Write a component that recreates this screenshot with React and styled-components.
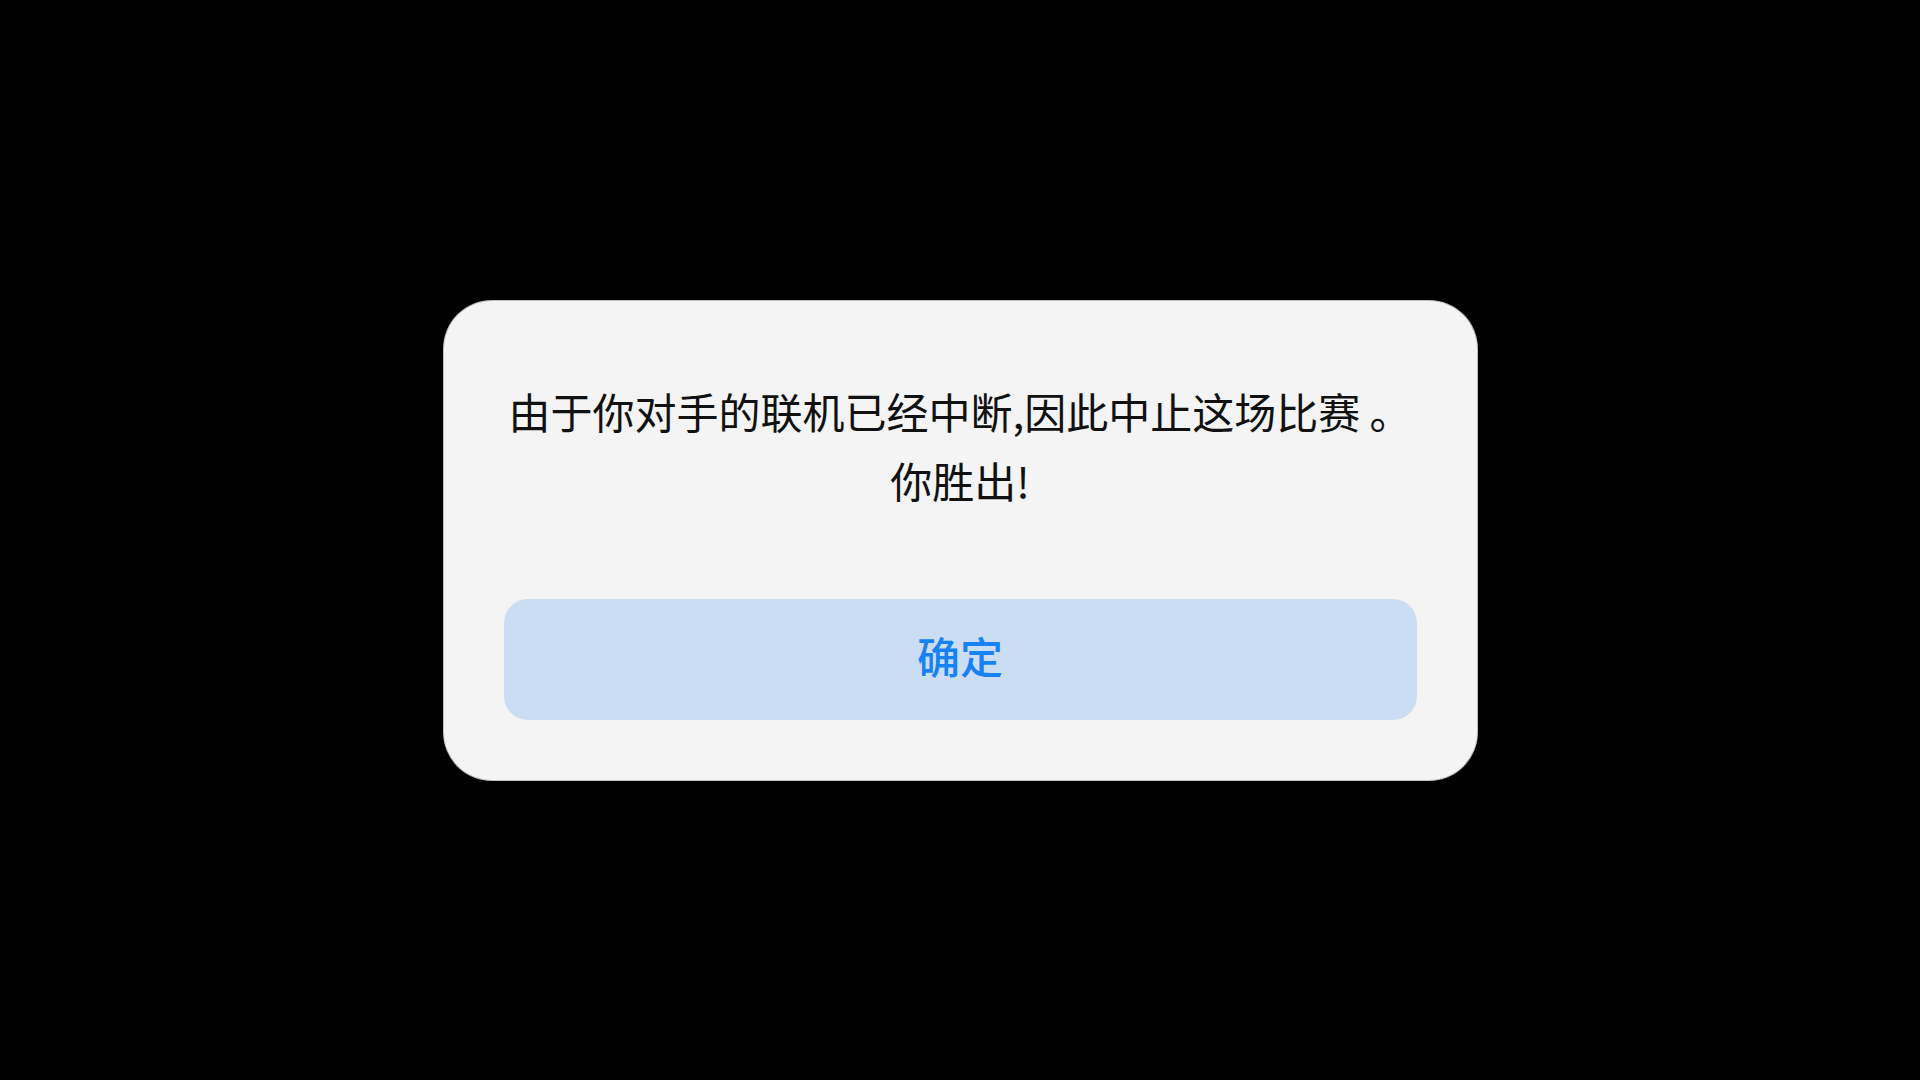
import React from 'react'
import styled, { createGlobalStyle } from 'styled-components'

const GlobalStyle = createGlobalStyle`
    html, body {
        margin: 0;
        padding: 0;
        background-color: #000;
    }
    body {
        font-family: "Noto Sans CJK SC", "Noto Sans", sans-serif;
    }
`

function App() {
    return (
        <>
            <GlobalStyle />
            <Screen>
                <Dialog>
                    <Message>
                        <Line>由于你对手的联机已经中断,因此中止这场比赛 。</Line>
                        <Line>你胜出!</Line>
                    </Message>
                    <ConfirmButton type="button">确定</ConfirmButton>
                </Dialog>
            </Screen>
        </>
    )
}

const Screen = styled.div`
    width: 100vw;
    height: 100vh;
    display: flex;
    align-items: center;
    justify-content: center;
    background-color: #000;
`
const Dialog = styled.div`
    width: 1033px;
    box-sizing: border-box;
    padding: 75px 60px 60px;
    background-color: #f4f4f4;
    border-radius: 48px;
    box-shadow: 0 0 0 1px #bdbdbd;
    display: flex;
    flex-direction: column;
    align-items: stretch;
    gap: 85px;
`
const Message = styled.div`
    display: flex;
    flex-direction: column;
    align-items: center;
`
const Line = styled.p`
    margin: 0;
    font-size: 42px;
    line-height: 69px;
    font-weight: 400;
    color: #111;
    white-space: nowrap;
    text-align: center;
`
const ConfirmButton = styled.button`
    height: 121px;
    border: none;
    border-radius: 24px;
    background-color: #cbddf2;
    color: #1682f5;
    font-family: "Noto Sans CJK SC", "Noto Sans", sans-serif;
    font-size: 43px;
    font-weight: 500;
    cursor: pointer;
    padding: 0 0 8px;
`

export default App
